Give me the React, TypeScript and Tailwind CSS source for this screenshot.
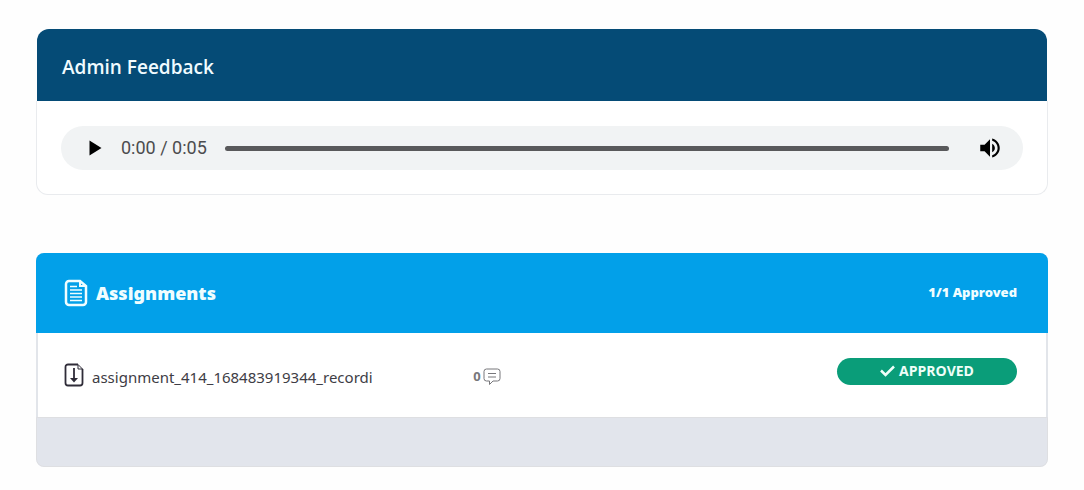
import { useState } from "react";

type Assignment = {
  id: number;
  name: string;
  comments: number;
};

const assignments: Assignment[] = [
  { id: 414, name: "assignment_414_168483919344_recordi", comments: 0 },
];

function DocumentIcon() {
  return (
    <svg width="24" height="28" viewBox="0 0 24 28" fill="none" stroke="currentColor" aria-hidden="true">
      <path d="M5 2h11l6 5v16a3 3 0 0 1-3 3H5a3 3 0 0 1-3-3V5a3 3 0 0 1 3-3z" strokeWidth="2.500" />
      <path d="M16 2v5h6" strokeWidth="2" />
      <path d="M6 7.500h7M6 11h12M6 14.500h12M6 18h12M6 21.500h12" strokeWidth="1.700" />
    </svg>
  );
}

function DownloadFileIcon() {
  return (
    <svg width="20" height="24" viewBox="0 0 20 24" fill="none" stroke="currentColor" aria-hidden="true">
      <path d="M14 1.500H4A2.500 2.500 0 0 0 1.500 4v16A2.500 2.500 0 0 0 4 22.500h12a2.500 2.500 0 0 0 2.500-2.500V6" strokeWidth="1.800" />
      <path d="M14 1.500L18.500 6H14z" strokeWidth="1" />
      <path d="M10 5v11" strokeWidth="1.800" />
      <path d="M6 15h8l-4 4.500z" fill="currentColor" stroke="none" />
    </svg>
  );
}

function CommentIcon() {
  return (
    <svg width="18" height="18" viewBox="0 0 18 18" fill="none" stroke="currentColor" aria-hidden="true">
      <path d="M3.500 1h11A2.500 2.500 0 0 1 17 3.500v7a2.500 2.500 0 0 1-2.500 2.500H10l-3.500 3.500V13h-3A2.500 2.500 0 0 1 1 10.500v-7A2.500 2.500 0 0 1 3.500 1z" />
      <path d="M5 5.500h8M5 9h8" />
    </svg>
  );
}

function AudioPlayer() {
  const [position, setPosition] = useState(0);

  return (
    <div className="flex h-11 items-center rounded-full bg-[#f1f3f4] pr-5 pl-6">
      <button type="button" aria-label="Play" className="text-black">
        <svg width="20" height="20" viewBox="0 0 20 20" fill="currentColor" aria-hidden="true">
          <path d="M4.500 2.500l12 7.500-12 7.500z" />
        </svg>
      </button>
      <span className="ml-4 w-26 font-[Roboto,sans-serif] text-lg text-[#4c4c4e]">0:00 / 0:05</span>
      <input
        type="range"
        min={0}
        max={5}
        value={position}
        onChange={(event) => setPosition(Number(event.target.value))}
        aria-label="Seek"
        className="h-[5px] min-w-0 flex-1 appearance-none rounded-full bg-[#59595b] [&::-webkit-slider-thumb]:appearance-none"
      />
      <button type="button" aria-label="Mute" className="ml-7 text-black">
        <svg width="26" height="26" viewBox="0 0 24 24" fill="currentColor" aria-hidden="true">
          <path d="M3 9v6h4l5 5V4L7 9H3zm13.500 3c0-1.770-1.020-3.290-2.500-4.030v8.050c1.480-.730 2.500-2.250 2.500-4.020zM14 3.230v2.060c2.890.860 5 3.540 5 6.710s-2.110 5.850-5 6.710v2.060c4.010-.910 7-4.490 7-8.770s-2.990-7.860-7-8.770z" />
        </svg>
      </button>
    </div>
  );
}

function AdminFeedback() {
  return (
    <section>
      <h2 className="mx-px rounded-t-xl bg-[#054b76] px-[25px] pt-6 pb-5 text-[19px] leading-7 font-semibold text-[#f0fbff]">
        Admin Feedback
      </h2>
      <div className="rounded-b-xl border border-t-0 border-[#e9ebee] bg-white px-6 pt-[25px] pb-6">
        <AudioPlayer />
      </div>
    </section>
  );
}

function AssignmentRow({ assignment }: { assignment: Assignment }) {
  return (
    <li className="flex h-21 items-center border-x-2 border-[#e2e5ea] bg-white pr-[29px] pl-[26px]">
      <div className="flex w-2/5 min-w-0 items-center gap-2">
        <span className="shrink-0 text-[#2f2c38]">
          <DownloadFileIcon />
        </span>
        <a href="#assignment" className="pt-1 font-['Noto_Sans',sans-serif] text-[15px] leading-6 text-[#3e3d45]">
          {assignment.name}
        </a>
      </div>
      <button type="button" aria-label={`${assignment.comments} comments`} className="ml-7 flex items-center gap-0.5 pt-1 text-[13px] font-bold text-[#77777b]">
        {assignment.comments}
        <CommentIcon />
      </button>
      <span className="mb-2 ml-auto flex h-[27px] w-45 items-center justify-center gap-1 rounded-full bg-[#0a9d79] text-sm font-bold text-[#effff9]">
        <svg width="15" height="12" viewBox="0 0 15 12" fill="none" stroke="currentColor" strokeWidth="2.500" aria-hidden="true">
          <path d="M1 5.500l4.500 4.500L14 1.500" />
        </svg>
        APPROVED
      </span>
    </li>
  );
}

function Assignments() {
  return (
    <section className="overflow-hidden rounded-lg bg-[#e2e5ec]">
      <header className="flex h-20 items-center bg-[#02a0e9] pr-[31px] pl-7 font-['Noto_Sans',sans-serif] text-[#f0fdff]">
        <DocumentIcon />
        <h2 className="ml-2 text-lg font-black">Assignments</h2>
        <span className="ml-auto text-[13px] font-black">1/1 Approved</span>
      </header>
      <ul>
        {assignments.map((assignment) => (
          <AssignmentRow key={assignment.id} assignment={assignment} />
        ))}
      </ul>
      <div className="h-[50px] rounded-b-lg border border-[#dedfe2]" />
    </section>
  );
}

export default function App() {
  return (
    <main className="flex min-h-screen flex-col gap-[58px] bg-[#fefefe] px-9 pt-[29px] font-['Open_Sans','Noto_Sans',sans-serif]">
      <AdminFeedback />
      <Assignments />
    </main>
  );
}
